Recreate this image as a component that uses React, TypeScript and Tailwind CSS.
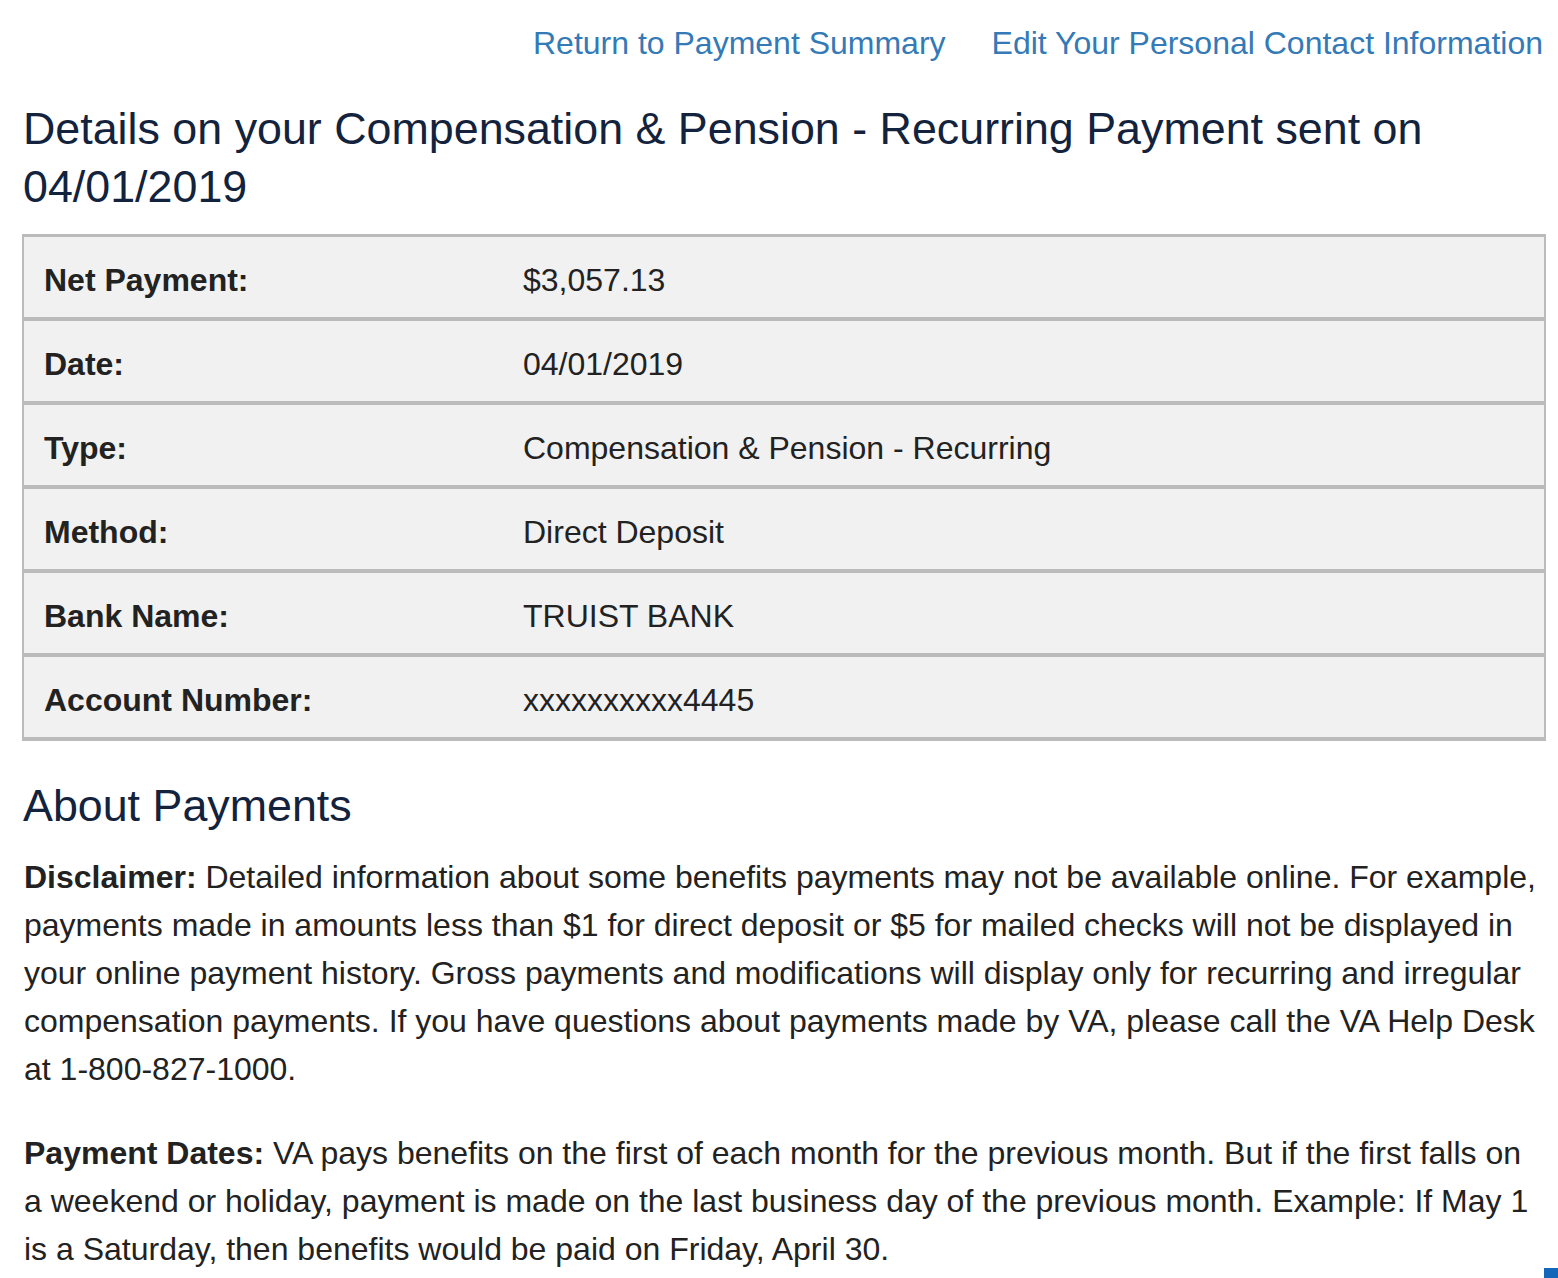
import React from "react";

const rows: [string, string][] = [
  ["Net Payment:", "$3,057.13"],
  ["Date:", "04/01/2019"],
  ["Type:", "Compensation & Pension - Recurring"],
  ["Method:", "Direct Deposit"],
  ["Bank Name:", "TRUIST BANK"],
  ["Account Number:", "xxxxxxxxxx4445"],
];

export default function App() {
  return (
    <div
      className="min-h-screen bg-white pl-[22px] pr-[12px] text-[#222222]"
      style={{ fontFamily: '"Liberation Sans", Arial, Helvetica, sans-serif' }}
    >
      <div className="flex justify-end gap-[46px] pt-[19px] pr-[3px] text-[32px] leading-[48px] text-[#337ab7]">
        <a href="#" className="hover:underline">Return to Payment Summary</a>
        <a href="#" className="hover:underline">Edit Your Personal Contact Information</a>
      </div>

      <h1 className="mt-[32px] pl-[1px] text-[44.8px] leading-[58px] font-normal text-[#13233d]">
        Details on your Compensation &amp; Pension - Recurring Payment sent on 04/01/2019
      </h1>

      <div className="mt-[19px] border-x-2 border-t-[3px] border-[#bbbbbb] bg-[#f1f1f1]">
        {rows.map(([label, value]) => (
          <div
            key={label}
            className="flex border-b-4 border-[#bbbbbb] pt-[25px] pb-[19px] text-[32px] leading-[36px]"
          >
            <div className="w-[479px] shrink-0 pl-[20px] font-bold text-[#222222]">{label}</div>
            <div className="pl-[20px] text-[#222222]">{value}</div>
          </div>
        ))}
      </div>

      <h2 className="mt-[35px] pl-[1px] text-[44.8px] leading-[58px] font-normal text-[#13233d]">
        About Payments
      </h2>

      <p className="mt-[19px] pl-[2px] text-[32px] leading-[48px] text-[#222222]">
        <b>Disclaimer:</b> Detailed information about some benefits payments may not be available online. For
        example, payments made in amounts less than $1 for direct deposit or $5 for mailed checks will not be
        displayed in your online payment history. Gross payments and modifications will display only for
        recurring and irregular compensation payments. If you have questions about payments made by VA, please
        call the VA Help Desk at 1-800-827-1000.
      </p>

      <p className="mt-[36px] pl-[2px] text-[32px] leading-[48px] text-[#222222]">
        <b>Payment Dates:</b> VA pays benefits on the first of each month for the previous month. But if the
        first falls on a weekend or holiday, payment is made on the last business day of the previous month.
        Example: If May 1 is a Saturday, then benefits would be paid on Friday, April 30.
      </p>

      <div className="fixed right-0 bottom-0 h-[10px] w-[14px] bg-[#1466b8]" />
    </div>
  );
}
